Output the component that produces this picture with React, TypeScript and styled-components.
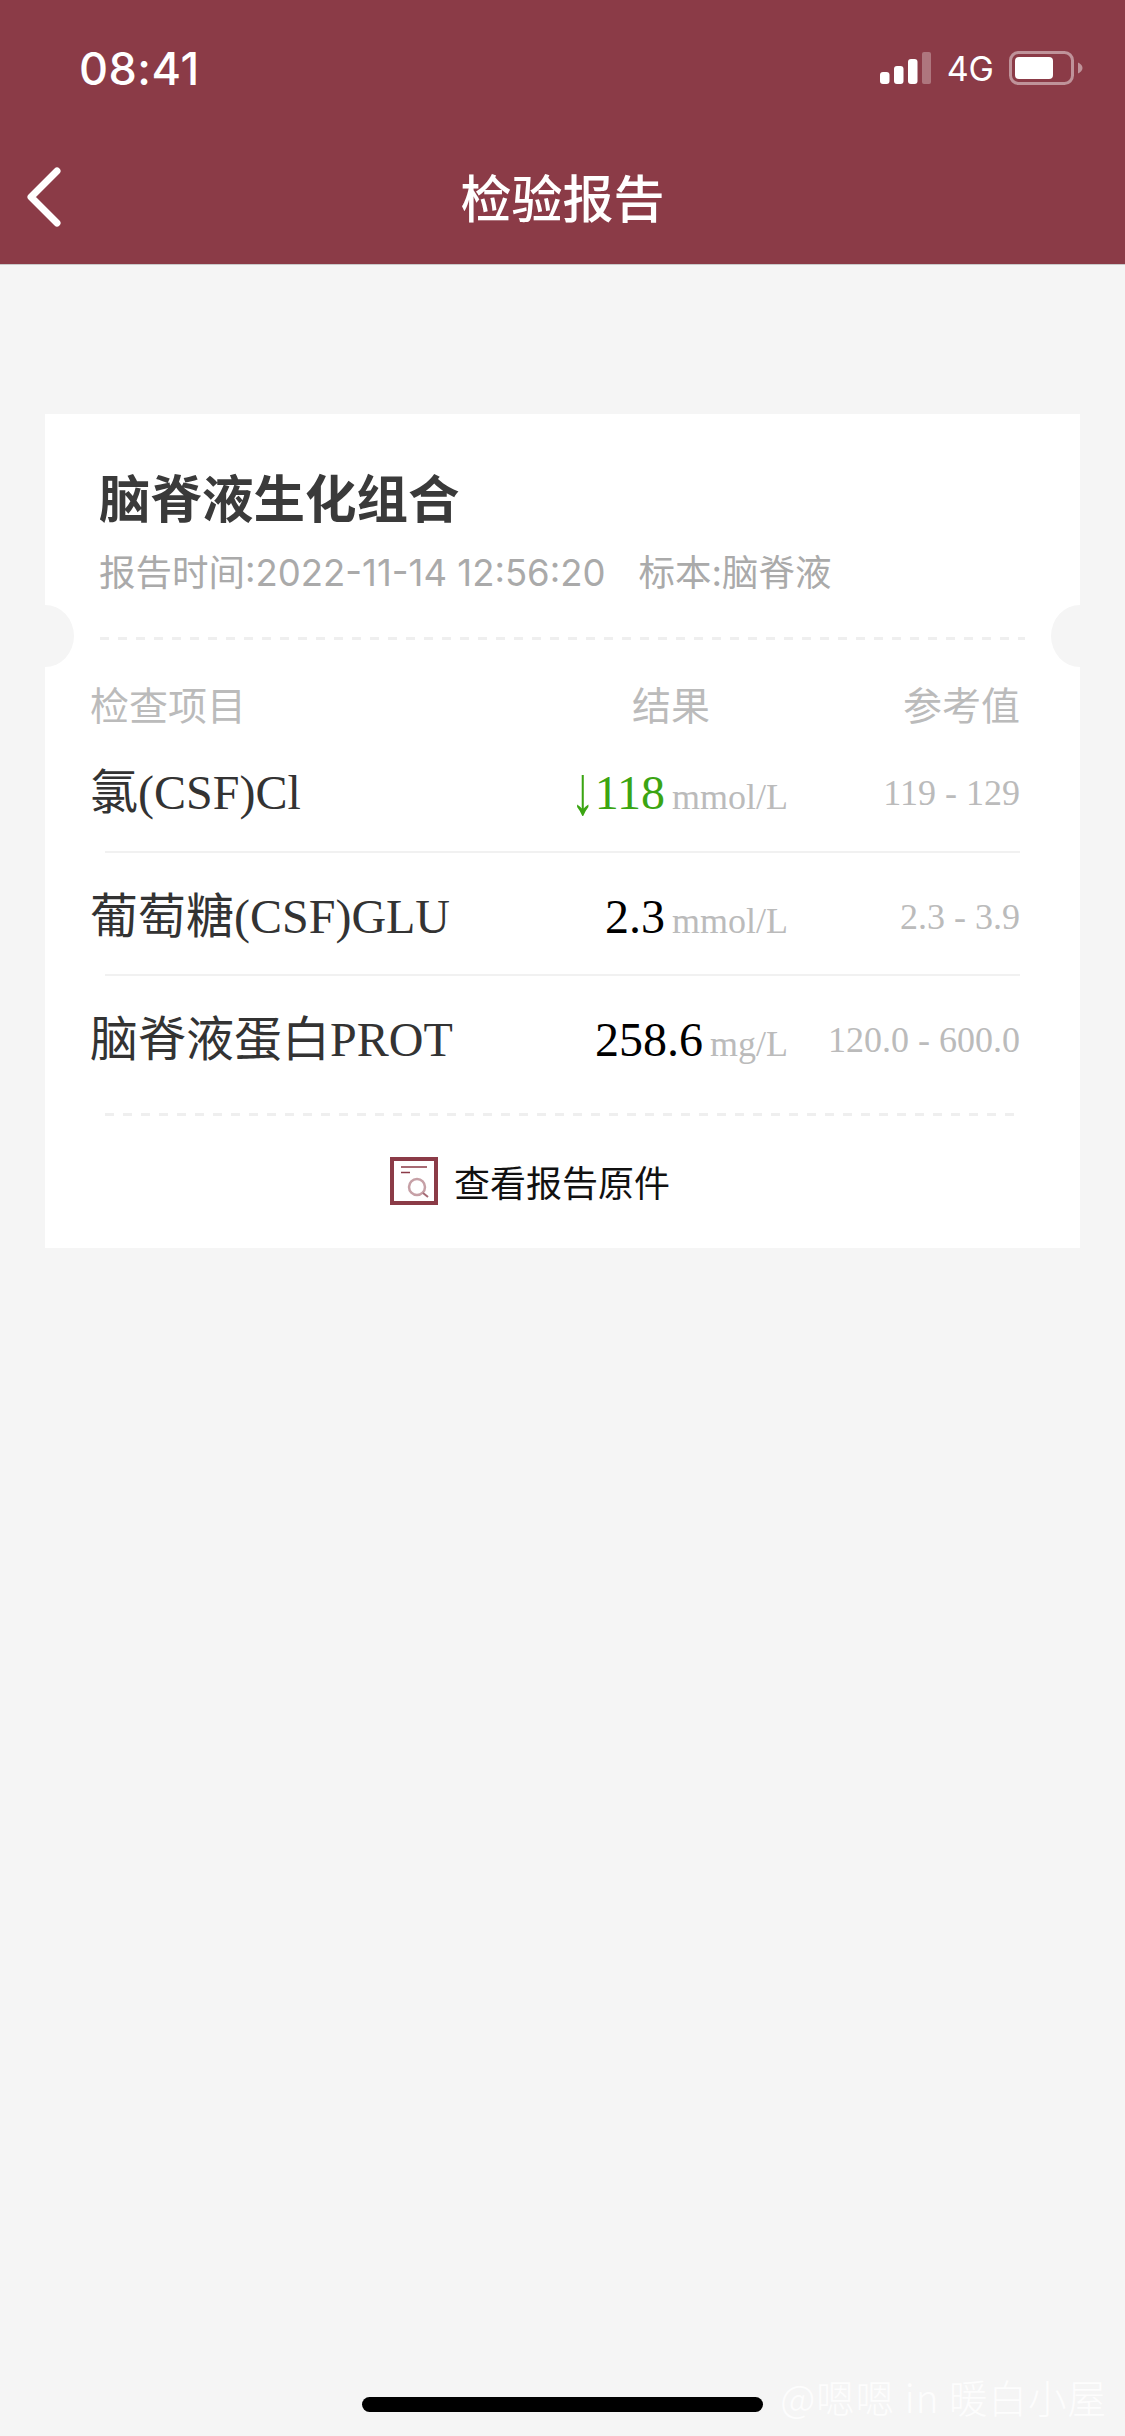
import React from 'react'
import styled, { createGlobalStyle } from 'styled-components'

const SANS = '"Inter", "Noto Sans CJK SC", sans-serif'
const SERIF = '"Liberation Serif", "Noto Sans CJK SC", serif'
const BRAND = '#8b3b47'

const GlobalStyle = createGlobalStyle`
  html, body {
    margin: 0;
    padding: 0;
    background: #f5f5f5;
  }
`

const Page = styled.div`
  position: relative;
  width: 1125px;
  height: 2436px;
  overflow: hidden;
  background: #f5f5f5;
  font-family: ${SANS};
`

const Header = styled.header`
  height: 264px;
  background: ${BRAND};
  border-bottom: 1px solid #c9c9c9;
  color: #fff;
`

const StatusBar = styled.div`
  height: 136px;
  display: flex;
  align-items: center;
  padding: 0 42px 0 79px;
  box-sizing: border-box;
`

const Clock = styled.span`
  font-size: 45px;
  font-weight: 500;
  letter-spacing: 0.5px;
  flex: 1;
`

const Network = styled.span`
  font-size: 34px;
  margin: 0 15px 0 15px;
`

const NavBar = styled.nav`
  height: 120px;
  display: flex;
  align-items: center;
  justify-content: center;
  position: relative;
`

const NavTitle = styled.h1`
  margin: 0;
  font-size: 51px;
  font-weight: 500;
  line-height: 60px;
  font-family: "Noto Sans CJK SC", sans-serif;
`

const BackIcon = styled.svg`
  position: absolute;
  left: 24px;
  top: 31px;
`

const Card = styled.section`
  position: relative;
  margin: 149px 45px 0;
  padding-top: 52px;
  height: 782px;
  background: #fff;
  overflow: hidden;
`

const Notch = styled.span<{ $side: 'left' | 'right' }>`
  position: absolute;
  top: 191px;
  ${(props) => props.$side}: -29px;
  width: 58px;
  height: 62px;
  border-radius: 50%;
  background: #f5f5f5;
`

const CardHead = styled.div`
  padding-left: 54px;
`

const CardTitle = styled.h2`
  margin: 0;
  font-size: 51.5px;
  line-height: 60px;
  font-weight: 700;
  color: #3a3a3a;
  font-family: "Noto Sans CJK SC", sans-serif;
`

const CardMeta = styled.p`
  margin: 22px 0 0;
  display: flex;
  gap: 33px;
  font-size: 36.5px;
  line-height: 50px;
  color: #aaa;
`

const DashLine = styled.div<{ $inset: string; $top: number }>`
  height: 3px;
  margin: ${(props) => props.$top}px ${(props) => props.$inset} 0;
  background-image: repeating-linear-gradient(90deg, #efefef 0 9px, transparent 9px 18px);
`

const Table = styled.div`
  padding: 0 60px 0 45px;
`

const HeadRow = styled.div`
  display: grid;
  grid-template-columns: 1fr 232px;
  margin-top: 41px;
  font-size: 39px;
  line-height: 50px;
  color: #bbb;
`

const HeadItem = styled.span`
  display: flex;
  justify-content: space-between;
  padding-right: 78px;
`

const HeadRef = styled.span`
  text-align: right;
`

const Row = styled.div<{ $first?: boolean }>`
  display: grid;
  grid-template-columns: 1fr 232px;
  align-items: baseline;
  height: ${(props) => (props.$first ? 120 : 123)}px;
  box-sizing: border-box;
  padding-top: ${(props) => (props.$first ? 32 : 36)}px;
  position: relative;
  font-family: ${SERIF};

  &::before {
    content: '';
    display: ${(props) => (props.$first ? 'none' : 'block')};
    position: absolute;
    top: 0;
    left: 15px;
    right: 0;
    height: 2px;
    background: #f1f1f1;
  }
`

const RowMain = styled.div`
  display: flex;
  justify-content: space-between;
  align-items: baseline;
`

const ItemName = styled.span`
  font-size: 48px;
  line-height: 60px;
  color: #333;
`

const Value = styled.span<{ $low?: boolean }>`
  font-size: 48px;
  color: ${(props) => (props.$low ? '#3ba512' : '#000')};
`

// the reference's arrow glyph is much taller than the one in Liberation Serif
const DownArrow = styled.span`
  display: inline-block;
  transform: scale(1, 1.45);
  transform-origin: 50% 58%;
`

const Unit = styled.span`
  font-size: 36px;
  color: #bbb;
  margin-left: 7px;
`

const RefRange = styled.span`
  align-self: start;
  font-size: 36px;
  line-height: 60px;
  color: #bbb;
  text-align: right;
`

const ViewOriginal = styled.div`
  display: flex;
  align-items: center;
  gap: 16px;
  height: 130px;
  padding-left: 345px;
  font-size: 36px;
  color: #111;
  font-family: "Noto Sans CJK SC", sans-serif;
`

const Watermark = styled.span`
  position: absolute;
  right: 18px;
  bottom: 18px;
  font-size: 38.5px;
  line-height: 44px;
  font-weight: 300;
  color: #fdfdfd;
  font-family: "Noto Sans CJK SC", sans-serif;
  letter-spacing: 1px;
`

const HomeBar = styled.div`
  position: absolute;
  left: 362px;
  top: 2397px;
  width: 401px;
  height: 15px;
  border-radius: 8px;
  background: #000;
`

const rows = [
  { name: '氯(CSF)Cl', value: '118', unit: 'mmol/L', range: '119 - 129', low: true },
  { name: '葡萄糖(CSF)GLU', value: '2.3', unit: 'mmol/L', range: '2.3 - 3.9' },
  { name: '脑脊液蛋白PROT', value: '258.6', unit: 'mg/L', range: '120.0 - 600.0' },
]

const SignalIcon = () => (
  <svg width="52" height="32" viewBox="0 0 52 32" fill="#fff">
    <rect x="0" y="20" width="9.5" height="12" rx="3" />
    <rect x="14" y="14" width="9.5" height="18" rx="3" />
    <rect x="28" y="7" width="9.5" height="25" rx="3" />
    <rect x="42" y="0" width="9" height="32" rx="2" opacity="0.3" />
  </svg>
)

const BatteryIcon = () => (
  <svg width="74" height="34" viewBox="0 0 74 34" fill="none">
    <rect x="1.5" y="1.5" width="62" height="31" rx="8" stroke="#fff" strokeOpacity="0.45" strokeWidth="3" />
    <rect x="6" y="6" width="38" height="22" rx="4" fill="#fff" />
    <path d="M69 11.5c2.5 1 4.5 3 4.5 5.5s-2 4.5-4.5 5.5z" fill="#fff" fillOpacity="0.45" />
  </svg>
)

const ReportIcon = () => (
  <svg width="48" height="48" viewBox="0 0 48 48" fill="none">
    <rect x="2" y="2" width="44" height="44" stroke={BRAND} strokeWidth="4" />
    <path d="M11 10h26M11 15.5h9" stroke={BRAND} strokeWidth="1.5" />
    <circle cx="27" cy="30" r="8" stroke="#c6a0a6" strokeWidth="2.5" />
    <path d="M33 36l5 4" stroke="#a56a74" strokeWidth="2" />
  </svg>
)

const App: React.FC = () => {
  return (
    <Page>
      <GlobalStyle />
      <Header>
        <StatusBar>
          <Clock>08:41</Clock>
          <SignalIcon />
          <Network>4G</Network>
          <BatteryIcon />
        </StatusBar>
        <NavBar>
          <BackIcon width="40" height="60" viewBox="0 0 40 60" fill="none">
            <path d="M33 4L7 30l26 26" stroke="#fff" strokeWidth="7" strokeLinecap="round" strokeLinejoin="round" />
          </BackIcon>
          <NavTitle>检验报告</NavTitle>
        </NavBar>
      </Header>

      <Card>
        <Notch $side="left" />
        <Notch $side="right" />
        <CardHead>
          <CardTitle>脑脊液生化组合</CardTitle>
          <CardMeta>
            <span>报告时间:2022-11-14 12:56:20</span>
            <span>标本:脑脊液</span>
          </CardMeta>
        </CardHead>
        <DashLine $inset="55px" $top={39} />
        <Table>
          <HeadRow>
            <HeadItem>
              <span>检查项目</span>
              <span>结果</span>
            </HeadItem>
            <HeadRef>参考值</HeadRef>
          </HeadRow>
          {rows.map((row, index) => (
            <Row key={row.name} $first={index === 0}>
              <RowMain>
                <ItemName>{row.name}</ItemName>
                <span>
                  <Value $low={row.low}>
                    {row.low && <DownArrow>↓</DownArrow>}
                    {row.value}
                  </Value>
                  <Unit>{row.unit}</Unit>
                </span>
              </RowMain>
              <RefRange>{row.range}</RefRange>
            </Row>
          ))}
        </Table>
        <DashLine $inset="60px" $top={16} />
        <ViewOriginal>
          <ReportIcon />
          查看报告原件
        </ViewOriginal>
      </Card>

      <Watermark>@嗯嗯 in 暖白小屋</Watermark>
      <HomeBar />
    </Page>
  )
}

export default App
